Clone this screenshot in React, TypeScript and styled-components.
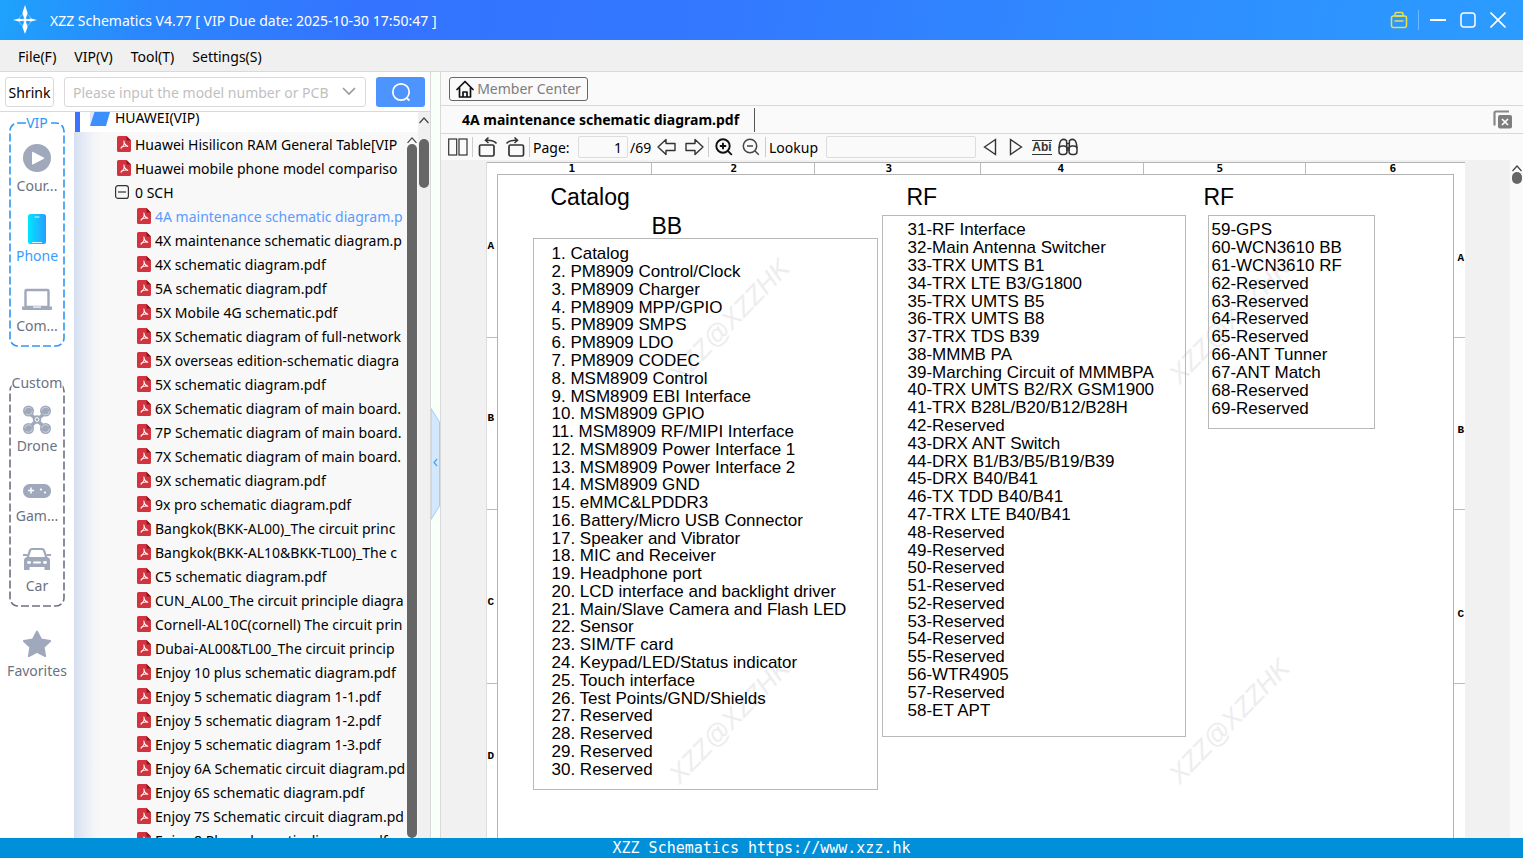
import React from 'react';
import styled, { createGlobalStyle } from 'styled-components';

const GlobalStyle = createGlobalStyle`
  *, *::before, *::after { box-sizing: border-box; }
  html, body, #root { height: 100%; }
  body {
    margin: 0;
    overflow: hidden;
    font-family: "Noto Sans", "Open Sans", sans-serif;
    font-size: 14px;
    line-height: 20px;
    color: #000;
    background: #fff;
  }
  button, input { font: inherit; color: inherit; margin: 0; }
  button { padding: 0; border: 0; background: none; cursor: pointer; }
  ul { list-style: none; margin: 0; padding: 0; }
`;

const Shell = styled.div`
  display: flex;
  flex-direction: column;
  height: 100vh;
`;

/* Title bar */

const TitleBar = styled.header`
  flex: none;
  display: flex;
  align-items: center;
  height: 40px;
  padding: 0 14px 0 12px;
  background: linear-gradient(100deg, #1ea2fc 0%, #2b86fd 10%, #3473ff 24%, #3377ff 45%, #2f8cff 75%, #2b9cff 100%);
`;

const AppTitle = styled.h1`
  flex: 1;
  margin: 0 0 0 12px;
  padding-top: 2px;
  font-size: 14px;
  font-weight: 400;
  color: #fff;
`;

const WindowButtons = styled.div`
  display: flex;
  align-items: center;
  gap: 8px;
`;

const WindowButton = styled.button<{ $tint?: string }>`
  display: grid;
  place-items: center;
  width: 22px;
  height: 22px;
  color: ${(p) => p.$tint ?? '#fff'};
`;

const TitleDivider = styled.span`
  width: 1px;
  height: 20px;
  background: #6db9ff;
`;

/* Menu bar */

const MenuBar = styled.nav`
  flex: none;
  display: flex;
  align-items: center;
  gap: 18px;
  height: 32px;
  padding: 2px 18px 0;
  background: #f0f0f0;
  border-bottom: 1px solid #d9d9d9;
`;

/* Body */

const Body = styled.div`
  flex: 1;
  min-height: 0;
  display: flex;
`;

const LeftPane = styled.aside`
  flex: none;
  display: flex;
  flex-direction: column;
  width: 431px;
  border-right: 1px solid #d9d9d9;
`;

const SearchBar = styled.form`
  flex: none;
  display: flex;
  align-items: center;
  gap: 10px;
  height: 40px;
  padding: 0 5px;
  border-bottom: 1px solid #d9d9d9;
`;

const ShrinkButton = styled.button`
  width: 49px;
  height: 30px;
  padding-top: 2px;
  border: 1px solid #d9d9d9;
  border-radius: 3px;
  background: #fff;
`;

const ModelField = styled.label`
  flex: 1;
  min-width: 0;
  display: flex;
  align-items: center;
  height: 30px;
  padding: 0 9px 0 8px;
  border: 1px solid #d9d9d9;
  border-radius: 3px;
  color: #999;
`;

const ModelInput = styled.input`
  flex: 1;
  min-width: 0;
  padding: 2px 0 0;
  border: 0;
  outline: 0;
  background: none;
  color: #000;
  &::placeholder { color: #bfbfbf; opacity: 1; }
`;

const SearchButton = styled.button`
  display: grid;
  place-items: center;
  width: 49px;
  height: 30px;
  border-radius: 3px;
  background: #4d94ff;
  color: #fff;
`;

const LeftContent = styled.div`
  flex: 1;
  min-height: 0;
  display: flex;
`;

/* Category rail */

const Rail = styled.nav`
  flex: none;
  width: 74px;
  padding-top: 10px;
  background: #fff;
  overflow: hidden;
`;

const RailGroup = styled.section<{ $color: string }>`
  position: relative;
  margin: 0 9px 35px;
  padding: 12px 0 3px;
  color: ${(p) => p.$color};
  & + & { margin-bottom: 12px; }
`;

const RailFrame = styled.svg`
  position: absolute;
  inset: 0;
  width: 100%;
  height: 100%;
  pointer-events: none;
`;

const RailLegend = styled.h2`
  position: absolute;
  top: -9px;
  left: 50%;
  transform: translateX(-50%);
  margin: 0;
  background: #fff;
  font-size: 14px;
  font-weight: 400;
`;

const RailItem = styled.button<{ $active?: boolean }>`
  position: relative;
  display: flex;
  flex-direction: column;
  align-items: center;
  gap: 4px;
  width: 100%;
  height: 70px;
  padding-top: 10px;
  color: ${(p) => (p.$active ? '#3b9bff' : '#6b7280')};
  & > svg { overflow: visible; }
`;

/* Document tree */

const Tree = styled.div`
  flex: 1;
  min-width: 0;
  display: flex;
  flex-direction: column;
`;

const BrandRow = styled.div`
  flex: none;
  display: flex;
  align-items: center;
  gap: 5px;
  height: 20px;
  margin-left: 1px;
  padding: 0 0 8px 10px;
  border-left: 5px solid #3b73ff;
  background: #fff;
  & > svg { flex: none; margin-top: 2px; }
`;

const TreeScroller = styled.div`
  flex: 1;
  min-height: 0;
  display: flex;
  background: linear-gradient(90deg, #d5dff1 0, #e6ebf4 10px, #f3f5f8 20px, #f8f8f8 28px);
`;

const TreeList = styled.ul`
  flex: 1;
  min-width: 0;
  overflow: hidden;
`;

const TreeRow = styled.li<{ $level: number; $active?: boolean }>`
  display: flex;
  align-items: center;
  gap: 4px;
  height: 24px;
  padding-left: ${(p) => 23 + p.$level * 20}px;
  white-space: nowrap;
  color: ${(p) => (p.$active ? '#5b9bff' : '#000')};
  & > svg { flex: none; width: 14px; margin-left: 20px; overflow: visible; }
`;

const TreeLink = styled.a`
  padding-top: 2px;
  color: inherit;
  text-decoration: none;
`;

const ScrollTrack = styled.div<{ $width: number; $bg: string }>`
  flex: none;
  display: flex;
  flex-direction: column;
  align-items: center;
  width: ${(p) => p.$width}px;
  padding-top: 4px;
  background: ${(p) => p.$bg};
  color: #444;
`;

const ScrollThumb = styled.span<{ $height: string; $offset?: number }>`
  width: 10px;
  height: ${(p) => p.$height};
  margin-top: ${(p) => p.$offset ?? 0}px;
  border-radius: 5px;
  background: #666;
`;

/* Splitter */

const Splitter = styled.div`
  flex: none;
  display: flex;
  align-items: center;
  width: 9px;
  background: #f9fff9;
`;

const CollapseButton = styled.button`
  width: 9px;
  height: 112px;
  margin-top: 18px;
`;

/* Viewer */

const RightPane = styled.main`
  flex: 1;
  min-width: 0;
  display: flex;
  flex-direction: column;
  border-left: 1px solid #d9d9d9;
  background: #fafafa;
`;

const MemberBar = styled.div`
  flex: none;
  display: flex;
  align-items: center;
  height: 34px;
  padding: 0 8px;
  border-bottom: 1px solid #d9d9d9;
`;

const MemberButton = styled.button`
  display: flex;
  align-items: center;
  justify-content: center;
  gap: 3px;
  width: 139px;
  height: 24px;
  border: 1px solid #666;
  border-radius: 3px;
  color: #7d7d7d;
`;

const TabBar = styled.div`
  flex: none;
  display: flex;
  align-items: center;
  justify-content: space-between;
  height: 28px;
  padding-right: 11px;
  border-bottom: 1px solid #d9d9d9;
`;

const Tab = styled.button`
  height: 24px;
  padding: 0 15px 0 21px;
  border-right: 1px solid #555;
  font-weight: 700;
`;

const Toolbar = styled.div`
  flex: none;
  display: flex;
  align-items: center;
  gap: 1px;
  height: 26px;
  padding-left: 4px;
`;

const ToolButton = styled.button`
  display: grid;
  place-items: center;
  width: 26px;
  height: 24px;
  color: #333;
`;

const ToolDivider = styled.span`
  width: 1px;
  height: 20px;
  margin-right: 1px;
  background: #ccc;
`;

const ToolLabel = styled.label<{ $width: number }>`
  width: ${(p) => p.$width}px;
  padding: 2px 0 0 1px;
  white-space: nowrap;
`;

const ToolInput = styled.input<{ $width: number }>`
  width: ${(p) => p.$width}px;
  height: 22px;
  padding: 0 5px;
  border: 1px solid #ddd;
  border-radius: 2px;
  outline: 0;
  background: #fafafa;
  text-align: right;
`;

const FindGroup = styled.div`
  display: flex;
`;

const Viewer = styled.div`
  flex: 1;
  min-height: 0;
  display: flex;
  background: #f1f1f1;
`;

const Canvas = styled.div`
  flex: 1;
  min-width: 0;
  display: flex;
  justify-content: center;
  padding-top: 2px;
  overflow: hidden;
`;

/* PDF sheet */

const Sheet = styled.article`
  position: relative;
  flex: none;
  display: grid;
  grid-template-columns: 10px 957px 11px;
  grid-template-rows: 11px 1fr;
  background: #fff;
  border-top: 1px solid #b4b4b4;
  box-shadow: -1px 0 0 #ddd;
  overflow: hidden;
  font-family: "Liberation Sans", Arial, sans-serif;
`;

const ColumnRuler = styled.div`
  grid-column: 2;
  display: flex;
`;

const RulerCell = styled.span<{ $size: number; $pad: number }>`
  width: ${(p) => p.$size}px;
  padding-left: ${(p) => p.$pad}px;
  border-right: 1px solid #bbb;
  font: 700 11px/12px "DejaVu Sans Mono", monospace;
  &:last-child { border-right: 0; }
`;

const RowRuler = styled.div<{ $column: number }>`
  grid-row: 2;
  grid-column: ${(p) => p.$column};
`;

const RowCell = styled.div<{ $size: number; $pad: number; $indent: number }>`
  height: ${(p) => p.$size}px;
  padding: ${(p) => p.$pad}px 0 0 ${(p) => p.$indent}px;
  border-bottom: 1px solid #bbb;
  font: 700 11px/12px "Liberation Mono", monospace;
`;

const SheetFrame = styled.div`
  grid-row: 2;
  grid-column: 2;
  display: flex;
  align-items: flex-start;
  height: 800px;
  padding: 4px 0 0 35px;
  border: 1px solid #b4b4b4;
`;

const IndexColumn = styled.section<{ $gap: number }>`
  position: relative;
  z-index: 1;
  margin-right: ${(p) => p.$gap}px;
`;

const SheetHeading = styled.h2<{ $indent: number }>`
  margin: 0;
  padding-left: ${(p) => p.$indent}px;
  font-size: 23px;
  font-weight: 400;
  line-height: 36px;
`;

const SheetSubheading = styled.h3`
  margin: 0;
  padding-left: 119px;
  font-size: 23px;
  font-weight: 400;
  line-height: 23px;
`;

const IndexBox = styled.ul<{ $width: number; $height: number; $rows: number; $pad: string; $inset?: number }>`
  display: grid;
  grid-template-rows: repeat(${(p) => p.$rows}, 1fr);
  align-items: center;
  width: ${(p) => p.$width}px;
  height: ${(p) => p.$height}px;
  margin-left: ${(p) => p.$inset ?? 0}px;
  padding: ${(p) => p.$pad};
  border: 1px solid #b8b8b8;
  font-size: 17px;
  line-height: 17px;
  white-space: nowrap;
`;

const WatermarkLayer = styled.div`
  position: absolute;
  top: 138px;
  left: 142px;
  display: grid;
  grid-template-columns: repeat(2, 500px);
  grid-template-rows: repeat(2, 400px);
`;

const Watermark = styled.span`
  justify-self: start;
  align-self: start;
  width: 200px;
  text-align: center;
  font-size: 26px;
  line-height: 40px;
  font-style: italic;
  color: #ededef;
  transform: rotate(-46deg);
`;

/* Status bar */

const StatusBar = styled.footer`
  flex: none;
  height: 20px;
  background: #0090da;
  color: #fff;
  text-align: center;
  font: 15px/20px "DejaVu Sans Mono", monospace;
`;

/* Icons */

const LogoIcon = () => (
  <svg width="26" height="30" viewBox="0 0 26 30" fill="#fff">
    <circle cx="13" cy="15" r="6" fill="none" stroke="#fff" strokeOpacity="0.35" strokeDasharray="6 3.400" strokeDashoffset="-1.700" />
    <path d="M13 0l2.600 8-1.600 5h-2l-1.600-5zM13 29l2.600-7-1.600-5h-2l-1.600 5zM1 15l6-1.500 4 .7v1.600l-4 .7zM25 15l-6-1.500-4 .7v1.600l4 .7z" />
    <circle cx="13" cy="15" r="2" />
  </svg>
);

const BriefcaseIcon = () => (
  <svg width="18" height="18" viewBox="0 0 18 18" fill="none" stroke="currentColor" strokeWidth="1.500">
    <rect x="1.500" y="5" width="15" height="11.500" rx="2" />
    <path d="M5 5V3a1.500 1.500 0 0 1 1.500-1.500h5A1.500 1.500 0 0 1 13 3v2M4.500 10h9M5 5h8" />
  </svg>
);

const MinimizeIcon = () => (
  <svg width="16" height="16" viewBox="0 0 16 16" stroke="currentColor" strokeWidth="2"><path d="M0 8h16" /></svg>
);

const MaximizeIcon = () => (
  <svg width="16" height="16" viewBox="0 0 16 16" fill="none" stroke="currentColor" strokeWidth="1.500">
    <rect x="1" y="1" width="14" height="14" rx="3" />
  </svg>
);

const CloseIcon = () => (
  <svg width="16" height="16" viewBox="0 0 16 16" stroke="currentColor" strokeWidth="1.600"><path d="M.5.5l15 15M15.500.5l-15 15" /></svg>
);

const ChevronDown = () => (
  <svg width="14" height="9" viewBox="0 0 14 9" fill="none" stroke="currentColor" strokeWidth="1.600"><path d="M1 1l6 6 6-6" /></svg>
);

const ChevronUp = () => (
  <svg width="10" height="8" viewBox="0 0 10 8" fill="none" stroke="currentColor" strokeWidth="1.200"><path d="M.5 7L5 2l4.500 5" /></svg>
);

const SearchIcon = () => (
  <svg width="20" height="20" viewBox="0 0 20 20" fill="none" stroke="currentColor" strokeWidth="1.700">
    <circle cx="10" cy="10" r="8.200" /><path d="M15.500 16l3 2.500" />
  </svg>
);

const FolderMark = () => (
  <svg width="20" height="14" viewBox="0 0 20 14"><path d="M0 0h6L0 14z" fill="#e0e8fd" /><path d="M4.500 0H20l-4 14H0z" fill="#3d8ffb" /></svg>
);

const PdfIcon = () => (
  <svg width="14" height="16" viewBox="0 0 14 16">
    <path d="M1.500 0H9.500L14 4.500v10a1.500 1.500 0 0 1-1.500 1.500h-11A1.500 1.500 0 0 1 0 14.500v-13A1.500 1.500 0 0 1 1.500 0z" fill="#d2343f" />
    <path d="M9.500 0L14 4.500h-4.500z" fill="#8f141d" />
    <path d="M6.900 5c.9 2-.7 5.300-2.900 7.200M7.100 6.500c.5 2 1.800 3.300 3.600 3.900M4.300 11.200c1.700-1 4-1.400 6.400-1.100" fill="none" stroke="#fff" strokeWidth="1.100" strokeLinecap="round" />
  </svg>
);

const CollapseBoxIcon = () => (
  <svg width="14" height="14" viewBox="2 0 14 14" fill="none" stroke="#333" strokeWidth="1.200">
    <rect x=".6" y=".6" width="12.800" height="12.800" rx="2.500" /><path d="M3 7h8" />
  </svg>
);

const MUTED = '#a0a8bc';

const PlayIcon = () => (
  <svg width="28" height="28" viewBox="0 0 28 28"><circle cx="14" cy="14" r="14" fill={MUTED} /><path d="M9.500 8.200v12L21 14.200z" fill="#fff" stroke="#fff" strokeLinejoin="round" /></svg>
);

const PhoneIcon = () => (
  <svg width="18" height="28" viewBox="0 0 18 28">
    <defs>
      <linearGradient id="phone" x1="0" x2="1"><stop offset="0" stopColor="#00e6ff" /><stop offset="1" stopColor="#2a9dff" /></linearGradient>
    </defs>
    <rect y="0" width="18" height="30" rx="2.500" fill="url(#phone)" />
    <path d="M7 3h4M4.500 28.500h9" stroke="#d9f6ff" strokeWidth="1.200" strokeLinecap="round" />
  </svg>
);

const LaptopIcon = () => (
  <svg width="30" height="28" viewBox="0 0 30 28">
    <rect x="3.500" y="6" width="23" height="17" rx="1" fill="none" stroke={MUTED} strokeWidth="2.400" />
    <path d="M0 22.500h30V25a1 1 0 0 1-1 1H1a1 1 0 0 1-1-1z" fill={MUTED} />
    <path d="M11 22.500h8v1.200h-8z" fill="#fff" />
  </svg>
);

const DroneIcon = () => (
  <svg width="28" height="28" viewBox="0 0 28 28">
    <path d="M5 8l9 8 9-8M5 25l9-9 9 9" fill="none" stroke={MUTED} strokeWidth="3.500" />
    {[[5.5, 7], [22.5, 7], [5.5, 24.5], [22.5, 24.5]].map(([x, y]) => (
      <g key={`${x}-${y}`}>
        <circle cx={x} cy={y} r="5.500" fill={MUTED} />
        <circle cx={x} cy={y} r="3.800" fill="none" stroke="#e8ebf2" strokeWidth=".6" strokeDasharray="9 3" />
      </g>
    ))}
    <circle cx="14" cy="15.500" r="4.200" fill={MUTED} />
    <circle cx="14" cy="15.500" r="1.900" fill="none" stroke="#fff" strokeWidth="1" />
  </svg>
);

const GamepadIcon = () => (
  <svg width="28" height="28" viewBox="0 0 28 28">
    <rect y="10" width="28" height="14" rx="6.500" fill={MUTED} />
    <path d="M8 13.500v6M5 16.500h6" stroke="#fff" strokeWidth="1.500" />
    <circle cx="18" cy="15.500" r="1.100" fill="#fff" /><circle cx="22" cy="18.500" r="1.100" fill="#fff" />
  </svg>
);

const CarIcon = () => (
  <svg width="28" height="28" viewBox="0 0 28 28">
    <path d="M4.500 14L7 6.500Q7.600 5 9 5h10q1.400 0 2 1.500L23.500 14" fill="none" stroke={MUTED} strokeWidth="2.200" />
    <path d="M0 11h4.500M23.500 11H28" stroke={MUTED} strokeWidth="2.200" />
    <path d="M4 13h20q3 .8 3 3.500V26h-5.500v-3h-15v3H1v-9.500Q1 13.800 4 13z" fill={MUTED} />
    <ellipse cx="6" cy="18.500" rx="2" ry="1.400" fill="#fff" /><ellipse cx="22" cy="18.500" rx="2" ry="1.400" fill="#fff" />
    <path d="M11 18.500h6" stroke="#fff" strokeWidth="2" strokeLinecap="round" />
  </svg>
);

const StarIcon = () => (
  <svg width="28" height="28" viewBox="0 0 28 28">
    <path d="M14 2.500l4.200 8 9 1.500-6.500 6.200 1.500 9-8.200-4.200L5.800 27.200l1.500-9L.8 12l9-1.500z" fill={MUTED} stroke={MUTED} strokeWidth="1.800" strokeLinejoin="round" />
  </svg>
);

const HomeIcon = () => (
  <svg width="18" height="18" viewBox="0 0 18 18" fill="none" stroke="#111" strokeWidth="1.700" strokeLinejoin="round" strokeLinecap="round">
    <path d="M1 9.500L9 1.500l8 8M3.500 8v9h11V8M7 17v-5h4v5" />
  </svg>
);

const CloseTabsIcon = () => (
  <svg width="19" height="19" viewBox="0 0 19 19" display="block">
    <path d="M1.500 15.500V3q0-1.500 1.500-1.500h13" fill="none" stroke="#888" strokeWidth="2.200" />
    <rect x="5" y="5" width="14" height="13.500" rx="2" fill="#7e7e7e" />
    <path d="M9 9l6 6M15 9l-6 6" stroke="#fff" strokeWidth="1.700" />
  </svg>
);

const BookIcon = () => (
  <svg width="20" height="18" viewBox="0 0 20 18" fill="none" stroke="currentColor" strokeWidth="1.200">
    <rect x=".7" y="1" width="8" height="16" /><rect x="11" y="1" width="8" height="16" />
  </svg>
);

const RotateIcon = ({ flip }: { flip?: boolean }) => (
  <svg width="20" height="20" viewBox="0 0 20 20" fill="none" stroke="currentColor" strokeWidth="1.700" transform={flip ? 'scale(-1 1)' : undefined}>
    <rect x="1.500" y="8" width="14.500" height="11" rx="1.500" />
    <path d="M18.500 6.500Q16 2.800 8 3.200M10.500.5L7.500 3.300l3 2.700" strokeWidth="1.500" />
  </svg>
);

const ArrowIcon = ({ flip }: { flip?: boolean }) => (
  <svg width="20" height="18" viewBox="0 0 20 18" fill="none" stroke="currentColor" strokeWidth="1.400" strokeLinejoin="round" transform={flip ? 'scale(-1 1)' : undefined}>
    <path d="M1 9l8-7.500V5.500h9v7H9v4z" />
  </svg>
);

const ZoomIcon = ({ plus }: { plus?: boolean }) => (
  <svg width="18" height="18" viewBox="0 0 18 18" fill="none" stroke={plus ? '#111' : '#444'} strokeWidth={plus ? 1.9 : 1.5}>
    <circle cx="8" cy="8" r="6.700" />
    <path d={plus ? 'M4.800 8h6.400M8 4.800v6.400M12.800 12.800l4 4' : 'M5 8h6M12.800 12.800l4 4'} />
  </svg>
);

const TriangleIcon = ({ flip }: { flip?: boolean }) => (
  <svg width="14" height="18" viewBox="0 0 14 18" fill="none" stroke="currentColor" strokeWidth="1.400" transform={flip ? 'scale(-1 1)' : undefined}>
    <path d="M1.500 9L12.500 1.500v15z" />
  </svg>
);

const BinocularsIcon = () => (
  <svg width="20" height="18" viewBox="0 0 20 18" fill="none" stroke="currentColor" strokeWidth="1.500">
    <path d="M1 10Q1.500 4 3 2.500 5.500.2 8.500 2.500L9 13M19 10Q18.500 4 17 2.500 14.500.2 11.500 2.500L11 13M9 5.500h2M9 10h2" />
    <rect x="1" y="8" width="8" height="8.500" rx="3" /><rect x="11" y="8" width="8" height="8.500" rx="3" />
  </svg>
);

const MatchText = styled.span`
  border-top: 1px solid #333;
  border-bottom: 1px solid #333;
  font: 700 12px/13px "Liberation Sans", Arial, sans-serif;
`;

/* Data */

const treeFiles = [
  '4A maintenance schematic diagram.p',
  '4X maintenance schematic diagram.p',
  '4X schematic diagram.pdf',
  '5A schematic diagram.pdf',
  '5X Mobile 4G schematic.pdf',
  '5X Schematic diagram of full-network',
  '5X overseas edition-schematic diagra',
  '5X schematic diagram.pdf',
  '6X Schematic diagram of main board.',
  '7P Schematic diagram of main board.',
  '7X Schematic diagram of main board.',
  '9X schematic diagram.pdf',
  '9x pro schematic diagram.pdf',
  'Bangkok(BKK-AL00)_The circuit princ',
  'Bangkok(BKK-AL10&BKK-TL00)_The c',
  'C5 schematic diagram.pdf',
  'CUN_AL00_The circuit principle diagra',
  'Cornell-AL10C(cornell) The circuit prin',
  'Dubai-AL00&TL00_The circuit princip',
  'Enjoy 10 plus schematic diagram.pdf',
  'Enjoy 5 schematic diagram 1-1.pdf',
  'Enjoy 5 schematic diagram 1-2.pdf',
  'Enjoy 5 schematic diagram 1-3.pdf',
  'Enjoy 6A Schematic circuit diagram.pd',
  'Enjoy 6S schematic diagram.pdf',
  'Enjoy 7S Schematic circuit diagram.pd',
  'Enjoy 8 Plus schematic diagram.pdf',
];

const baseband = [
  'Catalog', 'PM8909 Control/Clock', 'PM8909 Charger', 'PM8909 MPP/GPIO', 'PM8909 SMPS', 'PM8909 LDO',
  'PM8909 CODEC', 'MSM8909 Control', 'MSM8909 EBI Interface', 'MSM8909 GPIO', 'MSM8909 RF/MIPI Interface',
  'MSM8909 Power Interface 1', 'MSM8909 Power Interface 2', 'MSM8909 GND', 'eMMC&LPDDR3',
  'Battery/Micro USB Connector', 'Speaker and Vibrator', 'MIC and Receiver', 'Headphone port',
  'LCD interface and backlight driver', 'Main/Slave Camera and Flash LED', 'Sensor', 'SIM/TF card',
  'Keypad/LED/Status indicator', 'Touch interface', 'Test Points/GND/Shields', 'Reserved', 'Reserved',
  'Reserved', 'Reserved',
].map((name, i) => `${i + 1}. ${name}`);

const radio = [
  'RF Interface', 'Main Antenna Switcher', 'TRX UMTS B1', 'TRX LTE B3/G1800', 'TRX UMTS B5', 'TRX UMTS B8',
  'TRX TDS B39', 'MMMB PA', 'Marching Circuit of MMMBPA', 'TRX UMTS B2/RX GSM1900', 'TRX B28L/B20/B12/B28H',
  'Reserved', 'DRX ANT Switch', 'DRX B1/B3/B5/B19/B39', 'DRX B40/B41', 'TX TDD B40/B41', 'TRX LTE B40/B41',
  'Reserved', 'Reserved', 'Reserved', 'Reserved', 'Reserved', 'Reserved', 'Reserved', 'Reserved', 'WTR4905',
  'Reserved', 'ET APT',
].map((name, i) => `${i + 31}-${name}`);

const connectivity = [
  'GPS', 'WCN3610 BB', 'WCN3610 RF', 'Reserved', 'Reserved', 'Reserved', 'Reserved', 'ANT Tunner', 'ANT Match',
  'Reserved', 'Reserved',
].map((name, i) => `${i + 59}-${name}`);

const columnTicks = [[155, 72], [163, 79], [166, 71], [163, 77], [162, 73], [148, 84]];
const leftTicks: [string, number, number][] = [['A', 164, 66], ['B', 172, 74], ['C', 174, 86], ['D', 291, 66]];
const rightTicks: [string, number, number][] = [['A', 164, 78], ['B', 172, 86], ['C', 174, 98]];

const DashedFrame = () => (
  <RailFrame aria-hidden="true">
    <rect x="1" y="1" width="54" height="223" rx="8" fill="none" stroke="currentColor" strokeWidth="1.600" strokeDasharray="8 3" />
  </RailFrame>
);

const IndexList = ({ items, ...box }: { items: string[]; $width: number; $height: number; $pad: string; $inset?: number }) => (
  <IndexBox {...box} $rows={items.length}>
    {items.map((item) => <li key={item}>{item}</li>)}
  </IndexBox>
);

export default function App() {
  return (
    <Shell>
      <GlobalStyle />
      <TitleBar>
        <LogoIcon />
        <AppTitle>XZZ Schematics V4.77 [ VIP Due date: 2025-10-30 17:50:47 ]</AppTitle>
        <WindowButtons>
          <WindowButton $tint="#e8e04a" aria-label="Toolbox"><BriefcaseIcon /></WindowButton>
          <TitleDivider />
          <WindowButton aria-label="Minimize"><MinimizeIcon /></WindowButton>
          <WindowButton aria-label="Maximize"><MaximizeIcon /></WindowButton>
          <WindowButton aria-label="Close"><CloseIcon /></WindowButton>
        </WindowButtons>
      </TitleBar>

      <MenuBar>
        {['File(F)', 'VIP(V)', 'Tool(T)', 'Settings(S)'].map((m) => <button key={m}>{m}</button>)}
      </MenuBar>

      <Body>
        <LeftPane>
          <SearchBar onSubmit={(e) => e.preventDefault()}>
            <ShrinkButton type="button">Shrink</ShrinkButton>
            <ModelField>
              <ModelInput aria-label="Model number" placeholder="Please input the model number or PCB" />
              <ChevronDown />
            </ModelField>
            <SearchButton aria-label="Search"><SearchIcon /></SearchButton>
          </SearchBar>
          <LeftContent>
            <Rail>
              <RailGroup $color="#2f97f3">
                <DashedFrame />
                <RailLegend>VIP</RailLegend>
                <RailItem><PlayIcon />Cour...</RailItem>
                <RailItem $active><PhoneIcon />Phone</RailItem>
                <RailItem><LaptopIcon />Com...</RailItem>
              </RailGroup>
              <RailGroup $color="#6b7280">
                <DashedFrame />
                <RailLegend>Custom</RailLegend>
                <RailItem><DroneIcon />Drone</RailItem>
                <RailItem><GamepadIcon />Gam...</RailItem>
                <RailItem><CarIcon />Car</RailItem>
              </RailGroup>
              <RailItem><StarIcon />Favorites</RailItem>
            </Rail>
            <Tree>
              <BrandRow><FolderMark />HUAWEI(VIP)</BrandRow>
              <TreeScroller>
                <TreeList>
                  <TreeRow $level={0}><PdfIcon /><TreeLink href="#">Huawei Hisilicon RAM General Table[VIP</TreeLink></TreeRow>
                  <TreeRow $level={0}><PdfIcon /><TreeLink href="#">Huawei mobile phone model compariso</TreeLink></TreeRow>
                  <TreeRow $level={0}><CollapseBoxIcon /><TreeLink href="#">0 SCH</TreeLink></TreeRow>
                  {treeFiles.map((name, i) => (
                    <TreeRow key={name} $level={1} $active={i === 0}><PdfIcon /><TreeLink href="#">{name}</TreeLink></TreeRow>
                  ))}
                </TreeList>
                <ScrollTrack $width={12} $bg="transparent"><ChevronUp /><ScrollThumb $height="100%" /></ScrollTrack>
              </TreeScroller>
            </Tree>
            <ScrollTrack $width={12} $bg="#f0f0f0"><ChevronUp /><ScrollThumb $height="49px" $offset={15} /></ScrollTrack>
          </LeftContent>
        </LeftPane>

        <Splitter>
          <CollapseButton aria-label="Collapse panel">
            <svg width="9" height="112" viewBox="0 0 9 112" display="block">
              <path d="M0 .5L8.500 14v84L0 111.500z" fill="#d3e8fd" stroke="#9fcdf5" />
              <path d="M6 51l-3 3.500 3 3.500" fill="none" stroke="#4aa3f0" strokeWidth="1.200" />
            </svg>
          </CollapseButton>
        </Splitter>

        <RightPane>
          <MemberBar>
            <MemberButton><HomeIcon />Member Center</MemberButton>
          </MemberBar>
          <TabBar>
            <Tab>4A maintenance schematic diagram.pdf</Tab>
            <button aria-label="Close all tabs"><CloseTabsIcon /></button>
          </TabBar>
          <Toolbar>
            <ToolButton aria-label="Two pages"><BookIcon /></ToolButton>
            <ToolDivider />
            <ToolButton aria-label="Rotate left"><RotateIcon /></ToolButton>
            <ToolButton aria-label="Rotate right"><RotateIcon flip /></ToolButton>
            <ToolDivider />
            <ToolLabel $width={45} htmlFor="page">Page:</ToolLabel>
            <ToolInput $width={50} id="page" defaultValue="1" />
            <ToolLabel $width={24} as="span">/69</ToolLabel>
            <ToolButton aria-label="Previous page"><ArrowIcon /></ToolButton>
            <ToolButton aria-label="Next page"><ArrowIcon flip /></ToolButton>
            <ToolDivider />
            <ToolButton aria-label="Zoom in"><ZoomIcon plus /></ToolButton>
            <ToolButton aria-label="Zoom out"><ZoomIcon /></ToolButton>
            <ToolDivider />
            <ToolLabel $width={57} htmlFor="lookup">Lookup</ToolLabel>
            <ToolInput $width={150} id="lookup" />
            <FindGroup>
              <ToolButton aria-label="Find previous"><TriangleIcon /></ToolButton>
              <ToolButton aria-label="Find next"><TriangleIcon flip /></ToolButton>
              <ToolButton aria-label="Whole word"><MatchText>Abi</MatchText></ToolButton>
              <ToolButton aria-label="Find in files"><BinocularsIcon /></ToolButton>
            </FindGroup>
          </Toolbar>
          <Viewer>
            <Canvas>
              <Sheet>
                <WatermarkLayer aria-hidden="true">
                  {[0, 1, 2, 3].map((n) => <Watermark key={n}>XZZ@XZZHK</Watermark>)}
                </WatermarkLayer>
                <ColumnRuler>
                  {columnTicks.map(([size, pad], i) => <RulerCell key={i} $size={size} $pad={pad}>{i + 1}</RulerCell>)}
                </ColumnRuler>
                <RowRuler $column={1}>
                  {leftTicks.map(([name, size, pad]) => <RowCell key={name} $size={size} $pad={pad} $indent={1}>{name}</RowCell>)}
                </RowRuler>
                <SheetFrame>
                  <IndexColumn $gap={4}>
                    <SheetHeading $indent={18}>Catalog</SheetHeading>
                    <SheetSubheading>BB</SheetSubheading>
                    <IndexList items={baseband} $width={345} $height={552} $pad="6px 0 11px 18px" />
                  </IndexColumn>
                  <IndexColumn $gap={18}>
                    <SheetHeading $indent={25}>RF</SheetHeading>
                    <IndexList items={radio} $width={304} $height={522} $pad="5px 0 17px 25px" />
                  </IndexColumn>
                  <IndexColumn $gap={0}>
                    <SheetHeading $indent={0}>RF</SheetHeading>
                    <IndexList items={connectivity} $width={167} $height={214} $pad="5px 0 11px 3px" $inset={4} />
                  </IndexColumn>
                </SheetFrame>
                <RowRuler $column={3}>
                  {rightTicks.map(([name, size, pad]) => <RowCell key={name} $size={size} $pad={pad} $indent={4}>{name}</RowCell>)}
                </RowRuler>
              </Sheet>
            </Canvas>
            <ScrollTrack $width={13} $bg="#fafafa"><ChevronUp /><ScrollThumb $height="12px" /></ScrollTrack>
          </Viewer>
        </RightPane>
      </Body>

      <StatusBar>XZZ Schematics https://www.xzz.hk</StatusBar>
    </Shell>
  );
}
